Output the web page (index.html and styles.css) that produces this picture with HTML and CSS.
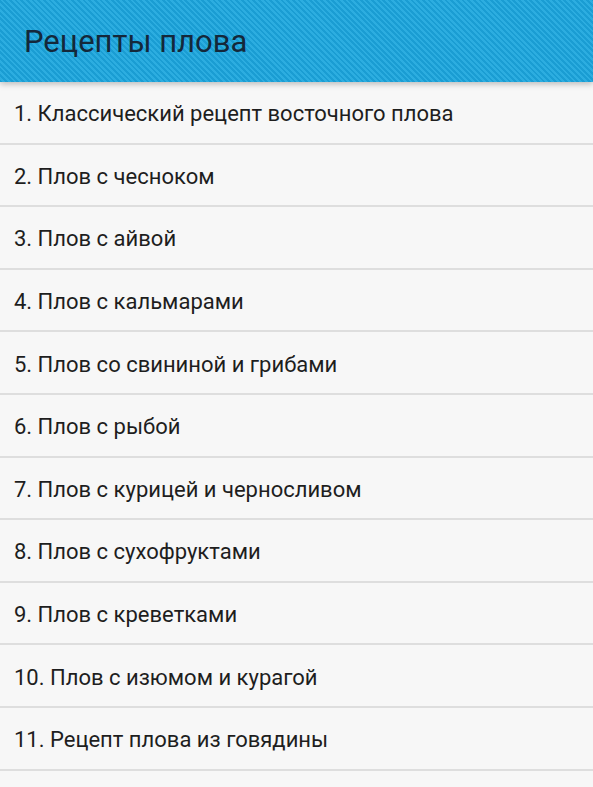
FILE: index.html
```html
<!DOCTYPE html>
<html lang="ru">
<head>
    <meta charset="UTF-8">
    <meta name="viewport" content="width=device-width, initial-scale=1.0">
    <title>Рецепты плова</title>
    <link rel="stylesheet" href="styles.css">
</head>
<body>
    <header class="action-bar">
        <h1 class="title">Рецепты плова</h1>
    </header>

    <ul class="recipe-list">
        <li class="recipe">1. Классический рецепт восточного плова</li>
        <li class="recipe">2. Плов с чесноком</li>
        <li class="recipe">3. Плов с айвой</li>
        <li class="recipe">4. Плов с кальмарами</li>
        <li class="recipe">5. Плов со свининой и грибами</li>
        <li class="recipe">6. Плов с рыбой</li>
        <li class="recipe">7. Плов с курицей и черносливом</li>
        <li class="recipe">8. Плов с сухофруктами</li>
        <li class="recipe">9. Плов с креветками</li>
        <li class="recipe">10. Плов с изюмом и курагой</li>
        <li class="recipe">11. Рецепт плова из говядины</li>
    </ul>
</body>
</html>
```

FILE: styles.css
```css
* {
    box-sizing: border-box;
    margin: 0;
    padding: 0;
    font-family: Roboto, "Liberation Sans", sans-serif;
}

html, body {
    height: 100%;
    overflow: hidden;
}

body {
    background-color: #f7f7f7;
}

.action-bar {
    position: relative;
    z-index: 2;
    display: flex;
    align-items: center;
    height: 82px;
    padding-left: 24px;
    background-color: #1ea3d8;
    background-image: repeating-linear-gradient(45deg, #1a9dd3 0, #1a9dd3 2px, #2cade0 2px, #2cade0 4px);
    box-shadow: 0 2px 6px rgba(0, 0, 0, 0.25);
}

.title {
    font-size: 31px;
    font-weight: 400;
    color: #14283a;
}

.recipe-list {
    list-style: none;
}

.recipe {
    display: flex;
    align-items: center;
    height: 62.6px;
    padding-left: 14px;
    padding-top: 3px;
    font-size: 22px;
    color: #1e1e1e;
    border-bottom: 2px solid #dedede;
}
```
